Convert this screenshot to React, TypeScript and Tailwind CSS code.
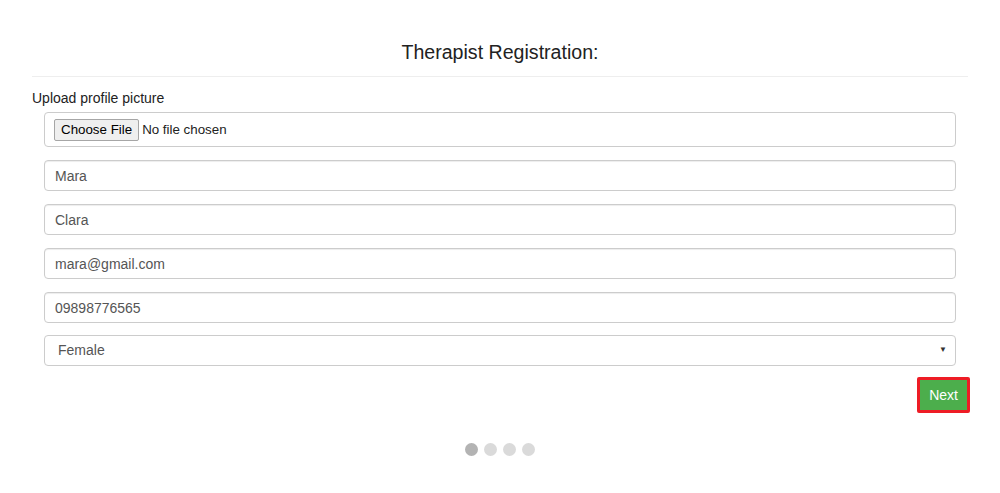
import React from 'react';

const fields = [
  { id: 'first', value: 'Mara' },
  { id: 'last', value: 'Clara' },
  { id: 'email', value: 'mara@gmail.com' },
  { id: 'phone', value: '09898776565' }
];

export default function App() {
  return (
    <div className="min-h-screen bg-white font-['Liberation_Sans',Arial,sans-serif] text-[#333]">
      <div className="mx-auto px-[32px] pt-[39px]">
        {/* Header */}
        <h3 className="text-center text-[19.6px] leading-[26px] text-[#222]">
          Therapist Registration:
        </h3>
        <hr className="mt-[11px] border-t border-[#eee]" />

        {/* Form */}
        <label className="mt-[11px] block text-[14px] leading-[20px] text-[#222]">
          Upload profile picture
        </label>
        <div className="mt-[4px] flex flex-col gap-[13px] px-[12px]">
          <div className="flex h-[35px] items-center rounded-[4px] border border-[#ccc] px-[9px] text-[13.33px]">
            <span className="flex h-[22px] items-center rounded-[2px] border border-[#a6a6a6] bg-[#efefef] px-[6px] text-black">
              Choose File
            </span>
            <span className="ml-[3px] text-[#222]">No file chosen</span>
          </div>

          {fields.map((f) =>
          <input
            key={f.id}
            type="text"
            defaultValue={f.value}
            className="h-[31px] w-full rounded-[4px] border border-[#ccc] px-[10px] text-[14px] text-[#555] outline-none shadow-[inset_0_1px_1px_rgba(0,0,0,0.075)]" />
          )}

          <div className="relative -mt-[1px] flex h-[31px] items-center rounded-[4px] border border-[#ccc] px-[13px] text-[14px] text-[#555]">
            Female
            <span className="absolute right-[8px] top-[10px] text-[8px] leading-none text-[#333]">▼</span>
          </div>
        </div>

        <div className="-mr-[2px] mt-[11px] flex justify-end">
          <button className="h-[36px] rounded-[2px] border-[3px] border-[#ee1c25] bg-[#4cae4c] px-[9px] text-[14px] text-white">
            Next
          </button>
        </div>

        {/* Step dots */}
        <div className="mt-[30px] flex justify-center gap-[6px]">
          <span className="h-[13px] w-[13px] rounded-full bg-[#b3b3b3]" />
          <span className="h-[13px] w-[13px] rounded-full bg-[#dadada]" />
          <span className="h-[13px] w-[13px] rounded-full bg-[#dadada]" />
          <span className="h-[13px] w-[13px] rounded-full bg-[#dadada]" />
        </div>
      </div>
    </div>);
}
